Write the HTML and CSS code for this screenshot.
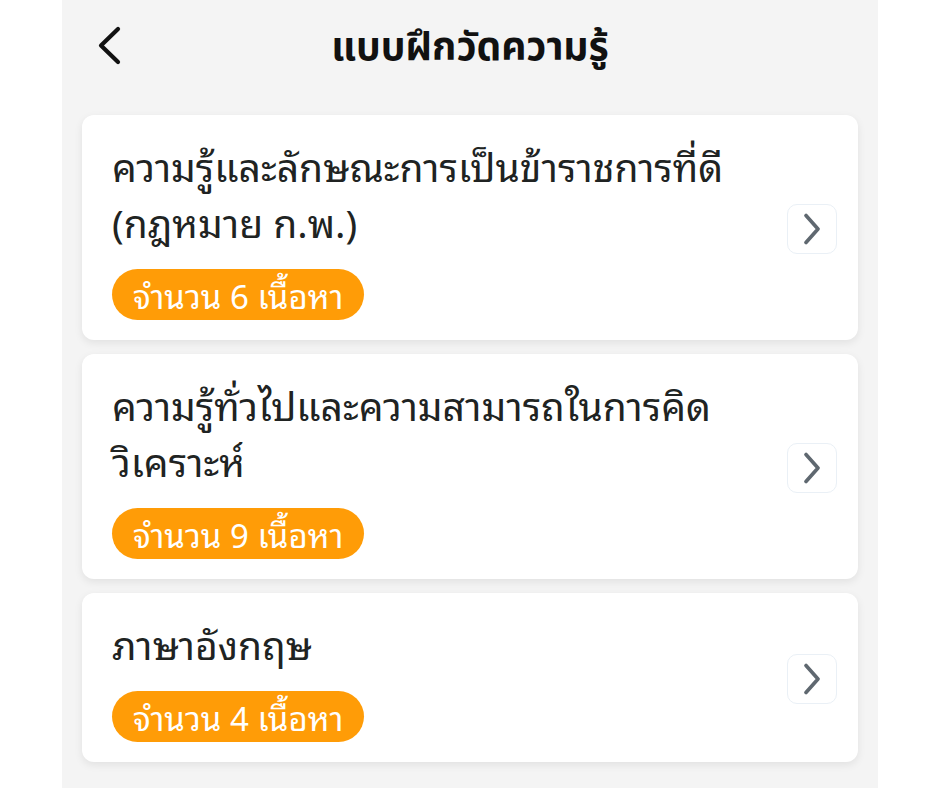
FILE: index.html
```html
<!DOCTYPE html>
<html lang="th">
<head>
<meta charset="utf-8">
<title>แบบฝึกวัดความรู้</title>
<link rel="stylesheet" href="styles.css">
</head>
<body>
<div class="screen">
  <header class="topbar">
    <button class="back" aria-label="ย้อนกลับ">
      <svg width="28" height="40" viewBox="0 0 28 40"><path d="M23 3 L6 19.5 L23 36" fill="none" stroke="#111" stroke-width="4.2" stroke-linecap="round" stroke-linejoin="round"/></svg>
    </button>
    <h1 class="title">แบบฝึกวัดความรู้</h1>
  </header>
  <main class="list">
    <a class="card">
      <div class="info">
        <div class="name">ความรู้และลักษณะการเป็นข้าราชการที่ดี<br>(กฎหมาย ก.พ.)</div>
        <span class="badge">จำนวน 6 เนื้อหา</span>
      </div>
      <span class="go"><svg width="22" height="32" viewBox="0 0 22 32"><path d="M5 2.5 L17 16 L5 29.5" fill="none" stroke="#5f6870" stroke-width="3.6" stroke-linecap="round" stroke-linejoin="round"/></svg></span>
    </a>
    <a class="card">
      <div class="info">
        <div class="name">ความรู้ทั่วไปและความสามารถในการคิด<br>วิเคราะห์</div>
        <span class="badge">จำนวน 9 เนื้อหา</span>
      </div>
      <span class="go"><svg width="22" height="32" viewBox="0 0 22 32"><path d="M5 2.5 L17 16 L5 29.5" fill="none" stroke="#5f6870" stroke-width="3.6" stroke-linecap="round" stroke-linejoin="round"/></svg></span>
    </a>
    <a class="card">
      <div class="info">
        <div class="name">ภาษาอังกฤษ</div>
        <span class="badge">จำนวน 4 เนื้อหา</span>
      </div>
      <span class="go"><svg width="22" height="32" viewBox="0 0 22 32"><path d="M5 2.5 L17 16 L5 29.5" fill="none" stroke="#5f6870" stroke-width="3.6" stroke-linecap="round" stroke-linejoin="round"/></svg></span>
    </a>
  </main>
</div>
</body>
</html>
```
FILE: styles.css
```css
html, body {
  margin: 0;
  padding: 0;
  background: #ffffff;
}
body {
  font-family: "Noto Sans Thai Looped", "Noto Sans", sans-serif;
  color: #222;
}
.screen {
  width: 816px;
  min-height: 788px;
  margin: 0 auto;
  background: #f4f4f4;
  box-sizing: border-box;
}
.topbar {
  position: relative;
  height: 96px;
  display: flex;
  align-items: center;
  justify-content: center;
}
.back {
  position: absolute;
  left: 33px;
  top: 26px;
  border: 0;
  background: none;
  padding: 0;
  display: flex;
}
.title {
  margin: 0;
  font-family: "Noto Sans Thai", "Noto Sans", sans-serif;
  font-size: 39px;
  font-weight: 700;
  color: #111;
  line-height: 1;
}
.list {
  display: flex;
  flex-direction: column;
  gap: 14px;
  padding: 19px 20px 0;
}
.card {
  display: flex;
  align-items: center;
  background: #fff;
  border-radius: 12px;
  padding: 22px 21px 20px 30px;
  box-shadow: 0 3px 8px rgba(0,0,0,0.08);
}
.info {
  flex: 1;
  display: flex;
  flex-direction: column;
  align-items: flex-start;
  gap: 20px;
}
.name {
  font-size: 39px;
  line-height: 56px;
  color: #202322;
}
.badge {
  display: inline-flex;
  align-items: center;
  height: 51px;
  padding: 0 21px;
  border-radius: 26px;
  background: #ff9c07;
  color: #fff;
  font-size: 33px;
  line-height: 1;
}
.go {
  width: 48px;
  height: 48px;
  border: 1px solid #eaf0f6;
  border-radius: 10px;
  display: flex;
  align-items: center;
  justify-content: center;
}
```
